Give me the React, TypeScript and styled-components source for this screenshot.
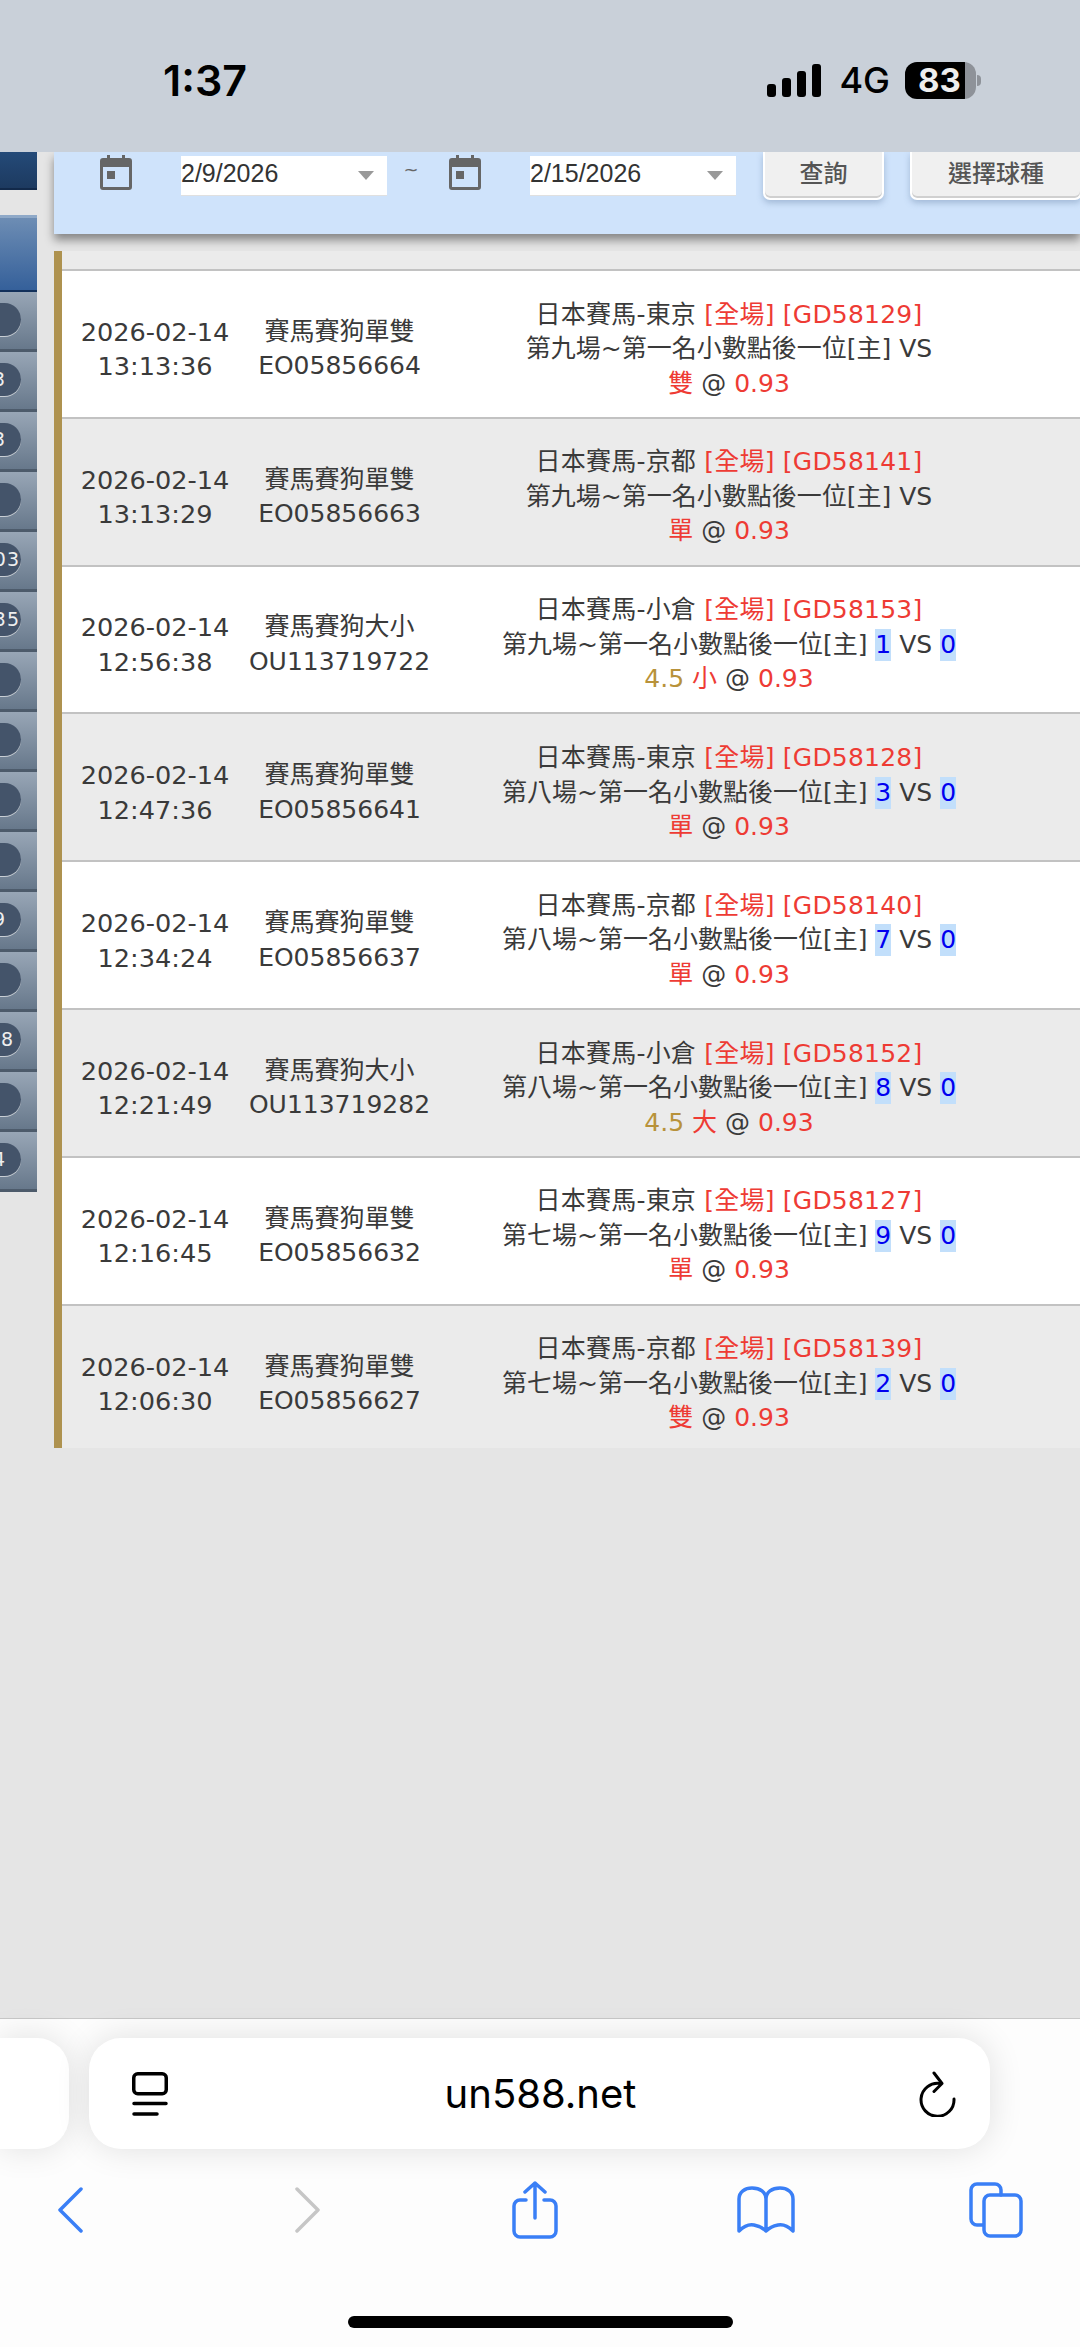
import React from "react";
import styled, { createGlobalStyle } from "styled-components";

const GlobalStyle = createGlobalStyle`
    html, body {
        margin: 0;
        padding: 0;
        background: #e5e5e5;
    }
`

const Screen = styled.div`
    width: 1080px;
    height: 2347px;
    display: flex;
    flex-direction: column;
    overflow: hidden;
    background: #e5e5e5;
    font-family: "DejaVu Sans", "Noto Sans CJK TC", sans-serif;
    color: #3a3a3a;
`

/* ---- phone status bar ---- */

const StatusBar = styled.div`
    height: 152px;
    flex: none;
    box-sizing: border-box;
    padding: 8px 104px 0 163px;
    display: flex;
    align-items: center;
    justify-content: space-between;
    background: #c9d0d9;
    color: #000;
    font-family: Inter, sans-serif;
    position: relative;
    z-index: 2;
`

const Clock = styled.div`
    font-size: 43px;
    font-weight: 600;
`

const StatusRight = styled.div`
    display: flex;
    align-items: center;
`

const NetworkLabel = styled.div`
    font-size: 36px;
    font-weight: 500;
    margin: 0 15px 0 18px;
`

const Battery = styled.div`
    width: 71px;
    height: 37px;
    border-radius: 12px;
    position: relative;
    background: linear-gradient(90deg, #000 0, #000 60px, #8e9299 60px);
    color: #eee;
    font-size: 33px;
    font-weight: 700;
    line-height: 37px;
    box-sizing: border-box;
    padding-left: 13px;

    &::after {
        content: "";
        position: absolute;
        right: -5px;
        top: 13px;
        width: 4px;
        height: 11px;
        border-radius: 0 4px 4px 0;
        background: #8e9299;
    }
`

/* ---- page under the status bar ---- */

const PageBody = styled.div`
    flex: 1;
    min-height: 0;
    display: flex;
    overflow: hidden;
`

const Sidebar = styled.div`
    width: 37px;
    flex: none;
    margin-right: 17px;
`

const SidebarHeader = styled.div`
    height: 38px;
    box-sizing: border-box;
    margin-bottom: 25px;
    background: linear-gradient(180deg, #244a78, #1d3a60);
    border-bottom: 2px solid #12294a;
`

const SidebarTitle = styled.div`
    height: 77px;
    box-sizing: border-box;
    background: linear-gradient(180deg, #6d8db4, #35609a);
    border-top: 3px solid #8fa9c8;
    border-bottom: 2px solid #12305a;
`

const SidebarItem = styled.div`
    height: 60px;
    box-sizing: border-box;
    display: flex;
    align-items: center;
    justify-content: flex-end;
    padding: 0 16px 3px 0;
    overflow: hidden;
    background: linear-gradient(180deg, #98a6b6, #67788b);
    border-bottom: 3px solid #4d5b6b;
`

const CountPill = styled.div<{ $pad: number }>`
    height: 33px;
    min-width: 60px;
    flex: none;
    box-sizing: border-box;
    padding-right: ${p => p.$pad}px;
    border-radius: 0 17px 17px 0;
    background: #44546a;
    box-shadow: 0 1px 0 #c8ced4;
    color: #eee;
    font-size: 19px;
    line-height: 33px;
    letter-spacing: 1px;
    text-align: right;
`

const Main = styled.div`
    flex: 1;
    min-width: 0;
`

const FilterPanel = styled.div`
    height: 82px;
    box-sizing: border-box;
    display: flex;
    align-items: flex-start;
    padding-left: 46px;
    background: #cfe3fb;
    box-shadow: 0 6px 9px rgba(0, 0, 0, 0.42);
    position: relative;
    z-index: 1;
`

const CalendarIcon = styled.svg`
    width: 32px;
    height: 35px;
    margin: 3px 49px 0 0;
    flex: none;
`

const DateSelect = styled.div`
    width: 206px;
    height: 40px;
    margin-top: 4px;
    flex: none;
    box-sizing: border-box;
    display: flex;
    justify-content: space-between;
    padding-right: 13px;
    background: #fff;
    border-bottom: 1px solid #e0e0e0;
    font-family: "Liberation Sans", sans-serif;
    font-size: 25px;
    line-height: 34px;
    color: #333;
`

const SelectArrow = styled.span`
    width: 0;
    height: 0;
    margin-top: 15px;
    border-left: 8px solid transparent;
    border-right: 8px solid transparent;
    border-top: 9px solid #999;
`

const Tilde = styled.div`
    width: 62px;
    flex: none;
    padding-right: 14px;
    box-sizing: border-box;
    text-align: center;
    color: #666;
    font-size: 18px;
    line-height: 36px;
`

const FilterButton = styled.div<{ $width: number; $gap: number }>`
    width: ${p => p.$width}px;
    height: 48px;
    margin-left: ${p => p.$gap}px;
    flex: none;
    box-sizing: border-box;
    background: #f0f0f0;
    border: 2px solid #fff;
    border-top: 0;
    border-radius: 0 0 7px 7px;
    box-shadow: inset 0 -2px 0 #d0d0d0, 0 3px 6px rgba(80, 110, 150, 0.35);
    text-align: center;
    color: #555;
    font-size: 24px;
    font-weight: 500;
    line-height: 44px;
`

const Table = styled.div`
    margin-top: 17px;
    border-left: 8px solid #ae924f;
`

const TableHead = styled.div`
    height: 20px;
    box-sizing: border-box;
    background: #ebebeb;
    border-bottom: 2px solid #c2c2c2;
`

const Row = styled.div<{ $even: boolean; $last: boolean }>`
    height: ${p => (p.$last ? "142px" : "147.8px")};
    box-sizing: border-box;
    display: grid;
    grid-template-columns: 186px 183px 596px 1fr;
    align-items: center;
    padding-top: ${p => (p.$last ? "15px" : "11px")};
    background: ${p => (p.$even ? "#ebebeb" : "#fff")};
    border-bottom: ${p => (p.$last ? "0" : "2px solid #c2c2c2")};
    font-size: 25px;
    line-height: 34.5px;
    text-align: center;
    white-space: nowrap;
`

const DateCell = styled.div`
    font-size: 25.6px;
`

const Cell = styled.div``

const MatchLine = styled.span`
    letter-spacing: 0.22px;
`

const Red = styled.span`
    color: #ee3b34;
`

const Gold = styled.span`
    color: #b8923a;
`

const Score = styled.span`
    display: inline-block;
    height: 32px;
    line-height: 32px;
    vertical-align: top;
    margin-top: 1px;
    background: #c2dffb;
    color: #0000f0;
`

/* ---- safari toolbar ---- */

const Footer = styled.div`
    flex: none;
    height: 329px;
    box-sizing: border-box;
    padding-top: 19px;
    background: #fdfdfd;
    border-top: 1px solid #c8c8c8;
    position: relative;
    z-index: 2;
`

const AddressRow = styled.div`
    display: flex;
    height: 111px;
    gap: 20px;
`

const TabStub = styled.div`
    width: 69px;
    flex: none;
    background: #fff;
    border-radius: 0 32px 32px 0;
    box-shadow: 0 0 34px rgba(0, 0, 0, 0.12);
`

const AddressBar = styled.div`
    width: 901px;
    flex: none;
    box-sizing: border-box;
    display: flex;
    align-items: center;
    justify-content: space-between;
    padding: 0 33px 0 43px;
    background: #fff;
    border-radius: 32px;
    box-shadow: 0 0 34px rgba(0, 0, 0, 0.12);
`

const UrlText = styled.div`
    margin-right: 6px;
    font-family: Inter, sans-serif;
    font-size: 40px;
    color: #000;
`

const ToolRow = styled.div`
    height: 60px;
    margin-top: 31px;
    padding-left: 58px;
    display: flex;
    align-items: center;
`

const ToolIcon = styled.svg<{ $gap?: number }>`
    flex: none;
    margin-left: ${p => p.$gap || 0}px;
    fill: none;
    stroke-linecap: round;
    stroke-linejoin: round;
`

const HomeIndicator = styled.div`
    width: 385px;
    height: 12px;
    margin: 76px auto 0;
    border-radius: 6px;
    background: #000;
`

const sideCounts = [
    { label: "", pad: 16 },
    { label: "3", pad: 15 },
    { label: "3", pad: 15 },
    { label: "", pad: 16 },
    { label: "03", pad: 1 },
    { label: "35", pad: 1 },
    { label: "", pad: 16 },
    { label: "", pad: 16 },
    { label: "", pad: 16 },
    { label: "", pad: 16 },
    { label: "9", pad: 15 },
    { label: "", pad: 16 },
    { label: "8", pad: 7 },
    { label: "", pad: 16 },
    { label: "4", pad: 15 },
]

const bets = [
    { time: "13:13:36", kind: "賽馬賽狗單雙", no: "EO05856664", place: "東京", code: "GD58129", race: "第九場", pick: "雙" },
    { time: "13:13:29", kind: "賽馬賽狗單雙", no: "EO05856663", place: "京都", code: "GD58141", race: "第九場", pick: "單" },
    { time: "12:56:38", kind: "賽馬賽狗大小", no: "OU113719722", place: "小倉", code: "GD58153", race: "第九場", home: "1", away: "0", line: "4.5", pick: "小" },
    { time: "12:47:36", kind: "賽馬賽狗單雙", no: "EO05856641", place: "東京", code: "GD58128", race: "第八場", home: "3", away: "0", pick: "單" },
    { time: "12:34:24", kind: "賽馬賽狗單雙", no: "EO05856637", place: "京都", code: "GD58140", race: "第八場", home: "7", away: "0", pick: "單" },
    { time: "12:21:49", kind: "賽馬賽狗大小", no: "OU113719282", place: "小倉", code: "GD58152", race: "第八場", home: "8", away: "0", line: "4.5", pick: "大" },
    { time: "12:16:45", kind: "賽馬賽狗單雙", no: "EO05856632", place: "東京", code: "GD58127", race: "第七場", home: "9", away: "0", pick: "單" },
    { time: "12:06:30", kind: "賽馬賽狗單雙", no: "EO05856627", place: "京都", code: "GD58139", race: "第七場", home: "2", away: "0", pick: "雙" },
]

function Calendar() {
    return <CalendarIcon viewBox="0 0 32 35">
        <path d="M7 0h3v5H7zM22 0h3v5h-3z" fill="#666" />
        <path fillRule="evenodd" fill="#666" d="M3 3h26a3 3 0 0 1 3 3v26a3 3 0 0 1-3 3H3a3 3 0 0 1-3-3V6a3 3 0 0 1 3-3zM3 12v20h26V12z" />
        <rect x="7" y="16" width="8" height="8" fill="#666" />
    </CalendarIcon>
}

function BetRow({ bet, even, last }: { bet: typeof bets[number] & { home?: string; away?: string; line?: string }; even: boolean; last: boolean }) {
    return <Row $even={even} $last={last}>
        <DateCell>2026-02-14<br />{bet.time}</DateCell>
        <Cell>{bet.kind}<br />{bet.no}</Cell>
        <Cell>
            <MatchLine>日本賽馬-{bet.place} <Red>[全場] [{bet.code}]</Red></MatchLine><br />
            {bet.race}~第一名小數點後一位[主] {bet.home && <><Score>{bet.home}</Score> </>}VS{bet.away && <> <Score>{bet.away}</Score></>}<br />
            {bet.line && <><Gold>{bet.line}</Gold> </>}<Red>{bet.pick}</Red> @ <Red>0.93</Red>
        </Cell>
    </Row>
}

export default function App() {
    return <Screen>
        <GlobalStyle />
        <StatusBar>
            <Clock>1:37</Clock>
            <StatusRight>
                <svg width="54" height="33" viewBox="0 0 54 33">
                    <rect x="0" y="20" width="9" height="13" rx="3" fill="#000" />
                    <rect x="15" y="14" width="9" height="19" rx="3" fill="#000" />
                    <rect x="30" y="7" width="9" height="26" rx="3" fill="#000" />
                    <rect x="45" y="0" width="9" height="33" rx="3" fill="#000" />
                </svg>
                <NetworkLabel>4G</NetworkLabel>
                <Battery>83</Battery>
            </StatusRight>
        </StatusBar>

        <PageBody>
            <Sidebar>
                <SidebarHeader />
                <SidebarTitle />
                {sideCounts.map((item, i) => (
                    <SidebarItem key={i}>
                        <CountPill $pad={item.pad}>{item.label}</CountPill>
                    </SidebarItem>
                ))}
            </Sidebar>
            <Main>
                <FilterPanel>
                    <Calendar />
                    <DateSelect>2/9/2026<SelectArrow /></DateSelect>
                    <Tilde>~</Tilde>
                    <Calendar />
                    <DateSelect>2/15/2026<SelectArrow /></DateSelect>
                    <FilterButton $width={121} $gap={27}>查詢</FilterButton>
                    <FilterButton $width={172} $gap={26}>選擇球種</FilterButton>
                </FilterPanel>
                <Table>
                    <TableHead />
                    {bets.map((bet, i) => (
                        <BetRow key={bet.no} bet={bet} even={i % 2 === 1} last={i === bets.length - 1} />
                    ))}
                </Table>
            </Main>
        </PageBody>

        <Footer>
            <AddressRow>
                <TabStub />
                <AddressBar>
                    <svg width="36" height="44" viewBox="0 0 36 44" fill="none" stroke="#000" strokeWidth="3.5" strokeLinecap="round">
                        <rect x="1.75" y="1.75" width="32.5" height="20" rx="4" />
                        <path d="M2 31.5h32M2 42h23" />
                    </svg>
                    <UrlText>un588.net</UrlText>
                    <svg width="38" height="46" viewBox="0 0 38 46" fill="none" stroke="#000" strokeWidth="3" strokeLinecap="round" strokeLinejoin="round">
                        <path d="M21 12.500A16.500 16.500 0 1 0 35 28" />
                        <path d="M15 2l8 10.500-8 8" />
                    </svg>
                </AddressBar>
            </AddressRow>
            <ToolRow>
                <ToolIcon width="25" height="46" viewBox="0 0 25 46" stroke="#3a7ff6" strokeWidth="3.5">
                    <path d="M23 2L2 23l21 21" />
                </ToolIcon>
                <ToolIcon $gap={212} width="25" height="46" viewBox="0 0 25 46" stroke="#c6c6c6" strokeWidth="3.5">
                    <path d="M2 2l21 21L2 44" />
                </ToolIcon>
                <ToolIcon $gap={192} width="46" height="58" viewBox="0 0 46 58" stroke="#3a7ff6" strokeWidth="3.5">
                    <path d="M14 19H8a6 6 0 0 0-6 6v25a6 6 0 0 0 6 6h30a6 6 0 0 0 6-6V25a6 6 0 0 0-6-6h-6" />
                    <path d="M23 37V2M13 11l10-9 10 9" />
                </ToolIcon>
                <ToolIcon $gap={179} width="58" height="48" viewBox="0 0 58 48" stroke="#3a7ff6" strokeWidth="3.5">
                    <path d="M29 45V13C29 6 23 2 15 2 8 2 2 6 2 13v32c5-5 10-7 15-6 5 1 9 3 12 6 3-3 7-5 12-6 5-1 10 1 15 6V13c0-7-6-11-13-11-8 0-14 4-14 11" />
                </ToolIcon>
                <ToolIcon $gap={174} width="54" height="56" viewBox="0 0 54 56" stroke="#3a7ff6" strokeWidth="3.5">
                    <path d="M14 43H8a6 6 0 0 1-6-6V8a6 6 0 0 1 6-6h18a6 6 0 0 1 6 6v5" />
                    <rect x="15" y="13" width="37" height="41" rx="6" />
                </ToolIcon>
            </ToolRow>
            <HomeIndicator />
        </Footer>
    </Screen>
}
